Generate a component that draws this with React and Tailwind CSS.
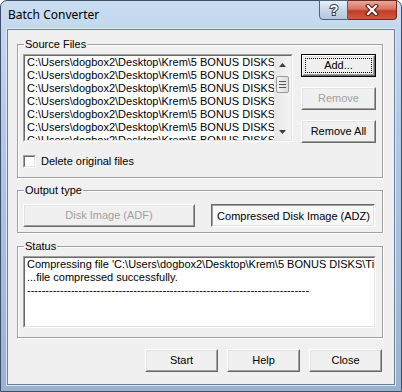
const FONT = "font-['Liberation_Sans',Arial,sans-serif] text-[11px] leading-[13px] text-black"

const FILES = Array.from({ length: 7 }, () => 'C:\\Users\\dogbox2\\Desktop\\Krem\\5 BONUS DISKS\\')

function Raised({ className = '', children }) {
  return (
    <div className={'border border-t-white border-l-white border-r-[#696969] border-b-[#696969] bg-[#f0f0f0] ' + className}>
      <div className="h-full border border-t-[#e3e3e3] border-l-[#e3e3e3] border-r-[#a0a0a0] border-b-[#a0a0a0] flex items-center justify-center">
        {children}
      </div>
    </div>
  )
}

function Button({ w = 'w-[75px]', disabled, def, children }) {
  if (def) {
    return (
      <div className={'h-[23px] border border-black ' + w}>
        <Raised className="h-full">
          <div className="m-[1px] self-stretch flex-1 border border-dotted border-black flex items-center justify-center">
            {children}
          </div>
        </Raised>
      </div>
    )
  }
  return (
    <Raised className={'h-[23px] ' + w}>
      <span className={disabled ? 'text-[#a0a0a0]' : ''}>{children}</span>
    </Raised>
  )
}

function Sunken({ className = '', children }) {
  return (
    <div className={'border border-t-[#a0a0a0] border-l-[#a0a0a0] border-r-white border-b-white ' + className}>
      <div className="h-full border border-t-[#696969] border-l-[#696969] border-r-[#e3e3e3] border-b-[#e3e3e3] bg-white overflow-hidden">
        {children}
      </div>
    </div>
  )
}

function Group({ label, className = '', children }) {
  return (
    <div className={'relative border border-[#a0a0a0] shadow-[inset_1px_1px_0_#fff,1px_1px_0_#fff] ' + className}>
      <span className="absolute left-[6px] top-[-7px] bg-[#f0f0f0] px-[1px]">{label}</span>
      {children}
    </div>
  )
}

function ScrollBar() {
  return (
    <div className="w-[17px] h-full bg-[linear-gradient(90deg,#e6e6e6,#f4f4f4)] flex flex-col items-center">
      <div className="h-[17px] flex items-center justify-center">
        <svg width="7" height="4" viewBox="0 0 7 4"><path d="M3.5 0 L7 4 L0 4 Z" fill="#3c3c3c" /></svg>
      </div>
      <div className="mt-[3px] w-[13px] h-[17px] rounded-[2px] border border-[#9a9a9a] bg-[linear-gradient(90deg,#f2f2f2,#dcdcdc)] flex flex-col items-center justify-center gap-[2px]">
        <div className="w-[7px] h-[1px] bg-[#555]" />
        <div className="w-[7px] h-[1px] bg-[#555]" />
        <div className="w-[7px] h-[1px] bg-[#555]" />
      </div>
      <div className="flex-1" />
      <div className="h-[17px] flex items-center justify-center">
        <svg width="7" height="4" viewBox="0 0 7 4"><path d="M0 0 L7 0 L3.5 4 Z" fill="#3c3c3c" /></svg>
      </div>
    </div>
  )
}

function TitleButtons() {
  return (
    <div className="flex mt-[-1px] mr-[-2px]">
      <div className="w-[29px] h-[20px] rounded-bl-[4px] border border-[#4f6180] bg-[linear-gradient(180deg,#e9f0f8,#c9d6e6_50%,#b6c7dc)] flex items-center justify-center">
        <svg width="14" height="16" viewBox="0 0 14 16">
          <text x="7" y="13" textAnchor="middle" fontFamily="Liberation Sans, Arial, sans-serif" fontWeight="bold" fontSize="14" fill="#fff" stroke="#2f3f5a" strokeWidth="2" paintOrder="stroke">?</text>
        </svg>
      </div>
      <div className="w-[49px] h-[20px] rounded-br-[4px] border border-l-0 border-[#6b2a22] bg-[linear-gradient(180deg,#e9a99c,#d9735f_45%,#c23c24_55%,#d25a40)] flex items-center justify-center">
        <svg width="14" height="12" viewBox="0 0 14 12">
          <path d="M3 2 L11 10 M11 2 L3 10" stroke="#4a1a14" strokeWidth="4.2" strokeLinecap="square" />
          <path d="M3 2 L11 10 M11 2 L3 10" stroke="#fff" strokeWidth="2.2" strokeLinecap="square" />
        </svg>
      </div>
    </div>
  )
}

export default function App() {
  return (
    <div className="w-[402px] h-[392px] bg-white">
      <div className="w-[402px] h-[392px] rounded-t-[7px] border border-[#3d4f69] bg-[linear-gradient(180deg,#c9dcf1,#b3cbe6_30%,#98b2d0)] px-[6px] pb-[6px] flex flex-col">
        <div className="h-[28px] flex justify-between items-start">
          <span className="pt-[6px] pl-[1px] font-['Noto_Sans',sans-serif] text-[12px] leading-[16px] text-black">Batch Converter</span>
          <TitleButtons />
        </div>
        <div className={'flex-1 border border-[#6a7f9c] shadow-[0_0_0_1px_#dde8f4] bg-[#f0f0f0] pl-[9px] pt-[14px] flex flex-col ' + FONT}>
          <Group label="Source Files" className="w-[366px] h-[134px] pl-[5px] pt-[9px]">
            <div className="flex">
              <Sunken className="w-[270px] h-[88px]">
                <div className="flex h-full">
                  <div className="flex-1 min-w-0 overflow-hidden pl-[2px]">
                    {FILES.map((f, i) => (
                      <div key={i} className="overflow-hidden whitespace-nowrap">{f}</div>
                    ))}
                  </div>
                  <ScrollBar />
                </div>
              </Sunken>
              <div className="ml-[8px] flex flex-col gap-[10px]">
                <Button def>Add...</Button>
                <Button disabled>Remove</Button>
                <Button>Remove All</Button>
              </div>
            </div>
            <div className="mt-[12px] flex items-center">
              <Sunken className="w-[13px] h-[13px]" />
              <span className="ml-[5px]">Delete original files</span>
            </div>
          </Group>

          <Group label="Output type" className="mt-[12px] w-[366px] h-[43px] pl-[5px] pt-[13px] flex gap-[16px]">
            <Button w="w-[172px]" disabled>Disk Image (ADF)</Button>
            <div className="w-[164px] h-[23px] border border-t-[#696969] border-l-[#696969] border-r-white border-b-white">
              <div className="h-full border border-t-[#a0a0a0] border-l-[#a0a0a0] border-r-[#e3e3e3] border-b-[#e3e3e3] bg-[#f8f8f8] flex items-center justify-center pt-[1px] pl-[1px]">
                Compressed Disk Image (ADZ)
              </div>
            </div>
          </Group>

          <Group label="Status" className="mt-[13px] w-[366px] h-[92px] pl-[5px] pt-[9px]">
            <Sunken className="w-[353px] h-[72px]">
              <div className="pl-[2px]">
                <div className="overflow-hidden whitespace-nowrap">Compressing file 'C:\Users\dogbox2\Desktop\Krem\5 BONUS DISKS\Tin</div>
                <div className="overflow-hidden whitespace-nowrap">...file compressed successfully.</div>
                <div className="overflow-hidden whitespace-nowrap">-----------------------------------------------------------------------------</div>
              </div>
            </Sunken>
          </Group>

          <div className="mt-[11px] w-[365px] flex justify-end gap-[9px]">
            <Button w="w-[73px]">Start</Button>
            <Button w="w-[73px]">Help</Button>
            <Button w="w-[73px]">Close</Button>
          </div>
        </div>
      </div>
    </div>
  )
}
